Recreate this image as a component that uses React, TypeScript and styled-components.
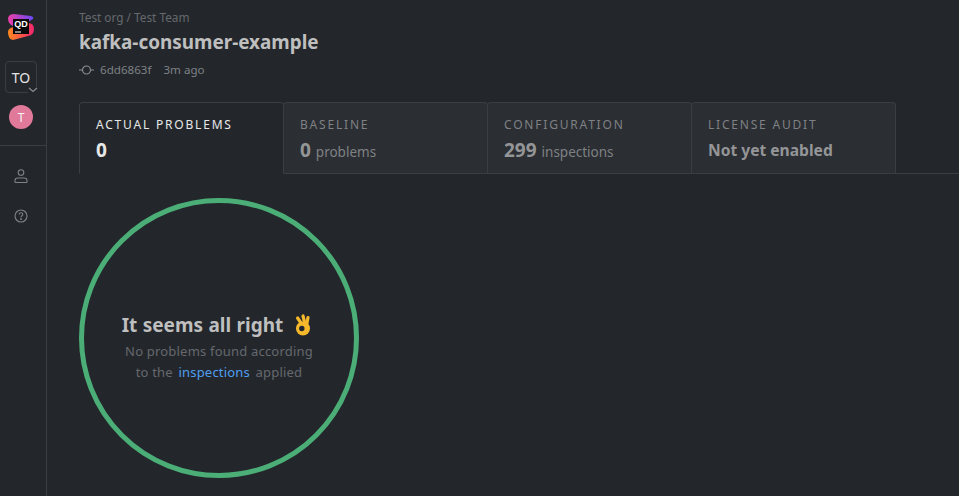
import React from "react";
import styled, { createGlobalStyle } from "styled-components";

const colors = {
  page: "#23272c",
  tab: "#2b2e33",
  line: "#3a3d42",
  title: "#bfbfbf",
  muted: "#7f8184",
  dim: "#66686c",
  link: "#4f9ef0",
  green: "#4bae77",
};

const Global = createGlobalStyle`
  html, body {
    margin: 0;
    height: 100%;
    background: ${colors.page};
    overflow: hidden;
    font-family: "Noto Sans", "Open Sans", sans-serif;
  }
`;

const Page = styled.div`
  display: flex;
  width: 959px;
  height: 496px;
  overflow: hidden;
`;

const Sidebar = styled.aside`
  width: 47px;
  box-sizing: border-box;
  flex-shrink: 0;
  padding-right: 4px;
  border-right: 1px solid ${colors.line};
  display: flex;
  flex-direction: column;
  align-items: center;
`;

const Logo = styled.svg`
  width: 26px;
  height: 26px;
  margin-top: 14px;
`;

const OrgButton = styled.div`
  position: relative;
  width: 32px;
  height: 32px;
  box-sizing: border-box;
  margin-top: 21px;
  border: 1px solid ${colors.line};
  border-radius: 4px;
  display: flex;
  align-items: center;
  justify-content: center;
  color: #e4e4e4;
  font-size: 14px;
`;

const Chevron = styled.svg`
  position: absolute;
  right: -2px;
  bottom: -1px;
  width: 10px;
  height: 6px;
  background: ${colors.page};
`;

const Avatar = styled.div`
  width: 24px;
  height: 24px;
  margin-top: 12px;
  border-radius: 50%;
  background: #e0799a;
  color: #f5f5f5;
  font-size: 12px;
  display: flex;
  align-items: center;
  justify-content: center;
`;

const SideDivider = styled.div`
  align-self: stretch;
  margin-right: -4px;
  height: 1px;
  margin-top: 16px;
  background: ${colors.line};
`;

const SideIcon = styled.svg<{ $top: number }>`
  width: 16px;
  height: 16px;
  margin-top: ${(p) => p.$top}px;
  color: ${colors.muted};
`;

const Main = styled.main`
  flex: 1;
  min-width: 0;
  display: flex;
  flex-direction: column;
`;

const Header = styled.header`
  padding: 9px 0 0 32px;
  height: 102px;
  box-sizing: border-box;
`;

const Breadcrumb = styled.div`
  font-size: 11.8px;
  line-height: 17px;
  color: ${colors.dim};
`;

const Title = styled.h1`
  margin: 3px 0 0;
  font-size: 18.9px;
  line-height: 26px;
  font-weight: 700;
  color: ${colors.title};
`;

const Meta = styled.div`
  margin-top: 6px;
  display: flex;
  align-items: center;
  font-size: 11.6px;
  line-height: 17px;
  color: ${colors.muted};
`;

const CommitIcon = styled.svg`
  width: 15px;
  height: 10px;
  margin-right: 6px;
`;

const Sha = styled.span`
  margin-right: 12px;
`;

const Tabs = styled.nav`
  display: flex;
  margin-left: 32px;
  border-bottom: 1px solid ${colors.line};
  height: 72px;
  box-sizing: border-box;
`;

const Tab = styled.div<{ $active?: boolean }>`
  width: 205px;
  box-sizing: border-box;
  height: ${(p) => (p.$active ? "72px" : "71px")};
  padding: 13px 16px 0;
  border: 1px solid ${colors.line};
  border-bottom: ${(p) => (p.$active ? `1px solid ${colors.page}` : "none")};
  border-radius: 4px 4px 0 0;
  background: ${(p) => (p.$active ? colors.page : colors.tab)};

  & + & {
    margin-left: -1px;
  }
`;

const TabLabel = styled.div<{ $active?: boolean }>`
  font-size: 12px;
  line-height: 17px;
  letter-spacing: 1.8px;
  color: ${(p) => (p.$active ? "#e8e8e8" : colors.muted)};
`;

const TabValue = styled.div<{ $active?: boolean; $size?: number }>`
  margin-top: 5px;
  font-size: ${(p) => p.$size ?? 19}px;
  line-height: 24px;
  font-weight: 700;
  color: ${(p) => (p.$active ? "#e8e8e8" : "#949597")};
`;

const TabValueNote = styled.span`
  font-size: 13.5px;
  font-weight: 400;
  color: ${colors.muted};
`;

const Content = styled.section`
  padding: 24px 0 0 32px;
`;

const Ring = styled.div`
  width: 280px;
  height: 280px;
  box-sizing: border-box;
  border: 5px solid ${colors.green};
  border-radius: 50%;
  display: flex;
  flex-direction: column;
  align-items: center;
  justify-content: center;
  padding-top: 18px;
`;

const RingTitle = styled.div`
  display: flex;
  align-items: center;
  font-size: 19px;
  line-height: 26px;
  font-weight: 700;
  word-spacing: 0.5px;
  color: ${colors.title};
`;

const OkHand = styled.svg`
  width: 16px;
  height: 22px;
  margin-left: 12px;
  margin-right: 5px;
`;

const RingText = styled.p`
  margin: 3px 0 0;
  font-size: 13px;
  line-height: 21px;
  letter-spacing: 0.2px;
  text-align: center;
  color: ${colors.dim};
`;

const InlineLink = styled.a`
  margin: 0 2px;
  color: ${colors.link};
  text-decoration: none;
`;

const tabs = [
  { label: "BASELINE", value: "0", note: "problems" },
  { label: "CONFIGURATION", value: "299", note: "inspections" },
];

export default function App() {
  return (
    <>
      <Global />
      <Page>
        <Sidebar>
          <Logo viewBox="0 0 26 26">
            <defs>
              <linearGradient id="top" x1="0" y1="0" x2="1" y2="0">
                <stop offset="0" stopColor="#ea3fa6" />
                <stop offset="1" stopColor="#6a48f2" />
              </linearGradient>
              <linearGradient id="bottom" x1="0" y1="0" x2="1" y2="0">
                <stop offset="0" stopColor="#ff8a1f" />
                <stop offset="1" stopColor="#f0246e" />
              </linearGradient>
            </defs>
            <path d="M0 4 Q1 0 6 0 L23 2 Q26 3 25 5 L20 8 L5 12 Q0 10 0 4Z" fill="url(#top)" />
            <path d="M0 18 Q0 14 6 13 L20 9 Q26 9 26 15 Q26 21 20 22 L5 26 Q0 25 0 18Z" fill="url(#bottom)" />
            <rect x="5" y="5" width="16" height="15" fill="#0a0a0a" />
            <text x="13" y="13" textAnchor="middle" fill="#fff" fontSize="9" fontWeight="700" fontFamily="Liberation Sans">QD</text>
            <rect x="7" y="17.5" width="6" height="1" fill="#fff" />
          </Logo>
          <OrgButton>
            TO
            <Chevron viewBox="0 0 10 6">
              <path d="M1 1l4 3.5L9 1" fill="none" stroke="#8b8d90" strokeWidth="1.2" />
            </Chevron>
          </OrgButton>
          <Avatar>T</Avatar>
          <SideDivider />
          <SideIcon $top={22} viewBox="0 0 16 16" fill="none" stroke="currentColor" strokeWidth="1.1">
            <circle cx="8" cy="4.5" r="2.8" />
            <path d="M2 14v-1.4c0-1.5 1.2-2.6 2.8-2.6h6.4c1.6 0 2.8 1.1 2.8 2.6V14c0 .3-.2.5-.5.5h-11c-.3 0-.5-.2-.5-.5z" />
          </SideIcon>
          <SideIcon $top={24} viewBox="0 0 16 16" fill="none" stroke="currentColor" strokeWidth="1.1">
            <circle cx="8" cy="8" r="6" />
            <path d="M6.2 6.4c0-1 .8-1.7 1.8-1.7s1.8.7 1.8 1.6c0 1.4-1.8 1.5-1.8 2.9" />
            <circle cx="8" cy="11" r=".4" fill="currentColor" />
          </SideIcon>
        </Sidebar>
        <Main>
          <Header>
            <Breadcrumb>Test org / Test Team</Breadcrumb>
            <Title>kafka-consumer-example</Title>
            <Meta>
              <CommitIcon viewBox="0 0 15 10" fill="none" stroke="#8b8d90" strokeWidth="1.2">
                <circle cx="7.5" cy="5" r="4" />
                <path d="M0 5h3.5M11.5 5H15" />
              </CommitIcon>
              <Sha>6dd6863f</Sha>
              <span>3m ago</span>
            </Meta>
          </Header>
          <Tabs>
            <Tab $active>
              <TabLabel $active>ACTUAL PROBLEMS</TabLabel>
              <TabValue $active>0</TabValue>
            </Tab>
            {tabs.map((t) => (
              <Tab key={t.label}>
                <TabLabel>{t.label}</TabLabel>
                <TabValue>
                  {t.value} <TabValueNote>{t.note}</TabValueNote>
                </TabValue>
              </Tab>
            ))}
            <Tab>
              <TabLabel>LICENSE AUDIT</TabLabel>
              <TabValue $size={15.6}>Not yet enabled</TabValue>
            </Tab>
          </Tabs>
          <Content>
            <Ring>
              <RingTitle>
                It seems all right
                <OkHand viewBox="0 0 16 22">
                  <g stroke="#f7b92b" strokeWidth="3.2" strokeLinecap="round">
                    <path d="M6 9 L2.6 4" />
                    <path d="M9.5 8 L8 2" />
                    <path d="M12 9 L13 3.5" />
                  </g>
                  <circle cx="8" cy="14.5" r="7" fill="#f7b92b" />
                  <circle cx="6.8" cy="14.5" r="2.7" fill="#23272c" />
                </OkHand>
              </RingTitle>
              <RingText>
                No problems found according
                <br />
                to the <InlineLink href="#">inspections</InlineLink> applied
              </RingText>
            </Ring>
          </Content>
        </Main>
      </Page>
    </>
  );
}
